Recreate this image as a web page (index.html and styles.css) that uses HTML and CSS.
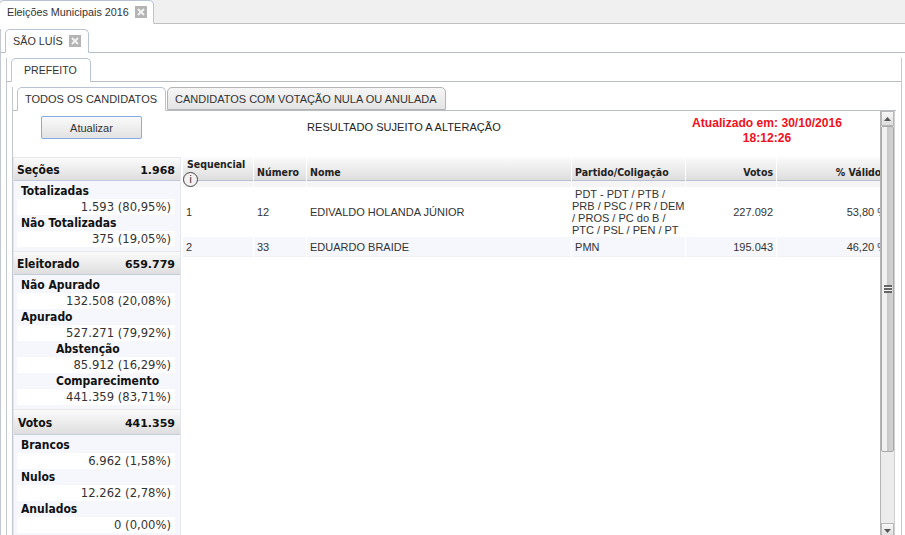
FILE: index.html
```html
<!DOCTYPE html>
<html lang="pt">
<head>
<meta charset="utf-8">
<title>Eleições Municipais 2016</title>
<link rel="stylesheet" href="styles.css">
</head>
<body>
<div class="tabbar top-bar">
  <div class="tab tab-main">Eleições Municipais 2016<span class="close"><svg viewBox="0 0 12 12" width="12" height="12"><rect width="12" height="12" fill="#b4b4b4"/><path d="M3 3l6 6M9 3l-6 6" stroke="#f2f2f2" stroke-width="2"/></svg></span></div>
</div>
<div class="panel p1">
  <div class="tabbar city-bar">
    <div class="tab tab-city">SÃO LUÍS<span class="close"><svg viewBox="0 0 12 12" width="12" height="12"><rect width="12" height="12" fill="#b4b4b4"/><path d="M3 3l6 6M9 3l-6 6" stroke="#f2f2f2" stroke-width="2"/></svg></span></div>
  </div>
  <div class="panel p2">
    <div class="tabbar office-bar">
      <div class="tab tab-office">PREFEITO</div>
    </div>
    <div class="panel p3">
      <div class="tabbar view-bar">
        <div class="tab tab-all">TODOS OS CANDIDATOS</div>
        <div class="tab tab-null">CANDIDATOS COM VOTAÇÃO NULA OU ANULADA</div>
      </div>
      <div class="view">
        <div class="content">
          <div class="actions">
            <button class="refresh">Atualizar</button>
            <div class="notice">RESULTADO SUJEITO A ALTERAÇÃO</div>
            <div class="updated">Atualizado em: 30/10/2016<br>18:12:26</div>
          </div>
          <div class="results">
            <aside class="stats">
              <div class="stat-head"><span>Seções</span><span class="total">1.968</span></div>
              <div class="stat-body">
                <div class="label">Totalizadas</div>
                <div class="value">1.593 (80,95%)</div>
                <div class="label">Não Totalizadas</div>
                <div class="value">375 (19,05%)</div>
              </div>
              <div class="stat-head"><span>Eleitorado</span><span class="total">659.779</span></div>
              <div class="stat-body">
                <div class="label">Não Apurado</div>
                <div class="value">132.508 (20,08%)</div>
                <div class="label">Apurado</div>
                <div class="value">527.271 (79,92%)</div>
                <div class="label sub">Abstenção</div>
                <div class="value">85.912 (16,29%)</div>
                <div class="label sub">Comparecimento</div>
                <div class="value">441.359 (83,71%)</div>
              </div>
              <div class="stat-head votes"><span>Votos</span><span class="total">441.359</span></div>
              <div class="stat-body">
                <div class="label">Brancos</div>
                <div class="value">6.962 (1,58%)</div>
                <div class="label">Nulos</div>
                <div class="value">12.262 (2,78%)</div>
                <div class="label">Anulados</div>
                <div class="value">0 (0,00%)</div>
              </div>
            </aside>
            <table class="grid">
              <colgroup>
                <col class="c-seq"><col class="c-num"><col class="c-name"><col class="c-party"><col class="c-votes"><col class="c-pct">
              </colgroup>
              <thead>
                <tr>
                  <th class="seq"><div class="seq-cell">Sequencial<span class="info">i</span></div></th>
                  <th>Número</th>
                  <th>Nome</th>
                  <th>Partido/Coligação</th>
                  <th class="num">Votos</th>
                  <th class="num">% Válidos</th>
                </tr>
                <tr class="spacer"><td></td><td></td><td></td><td></td><td></td><td></td></tr>
              </thead>
              <tbody>
                <tr>
                  <td>1</td><td>12</td><td>EDIVALDO HOLANDA JÚNIOR</td>
                  <td class="party">&nbsp;PDT - PDT / PTB / PRB / PSC / PR / DEM / PROS / PC do B / PTC / PSL / PEN / PT</td>
                  <td class="num">227.092</td><td class="num">53,80 %</td>
                </tr>
                <tr class="alt">
                  <td>2</td><td>33</td><td>EDUARDO BRAIDE</td>
                  <td class="party">&nbsp;PMN</td>
                  <td class="num">195.043</td><td class="num">46,20 %</td>
                </tr>
              </tbody>
            </table>
          </div>
        </div>
        <div class="scrollbar">
          <div class="arrow up"><svg viewBox="0 0 7 4" width="7" height="4"><path d="M3.500 0L7 4H0z" fill="#555"/></svg></div>
          <div class="thumb"><div class="grip"></div></div>
          <div class="track"></div>
          <div class="arrow down"><svg viewBox="0 0 7 4" width="7" height="4"><path d="M0 0h7L3.500 4z" fill="#555"/></svg></div>
        </div>
      </div>
    </div>
  </div>
</div>
</body>
</html>
```
FILE: styles.css
```css
* { box-sizing: border-box; }
html, body { margin: 0; height: 535px; overflow: hidden; }
body { background: #fff; font: 11px "Liberation Sans", Arial, sans-serif; color: #222; }

.tabbar { display: flex; align-items: flex-end; border-bottom: 1px solid #b8bcc4; }
.top-bar { height: 24px; background: #f0f0f0; border-bottom-color: #c0c0c0; }
.city-bar { height: 24px; margin-top: 5px; padding-left: 4px; }
.office-bar { height: 24px; margin-top: 5px; padding-left: 4px; }
.view-bar { height: 24px; margin-top: 5px; padding-left: 4px; gap: 1px; }

.tab {
  height: 24px; margin-bottom: -1px; background: #fff;
  border: 1px solid #b8c4d4; border-bottom-color: #fff; border-radius: 5px 5px 0 0;
  display: flex; align-items: center; color: #333;
}
.tab-main { width: 155px; margin-left: -1px; padding-left: 7px; font-size: 10.800px; }
.tab-city { width: 84px; padding-left: 7px; font-size: 10.800px; }
.tab-office { width: 80px; padding-left: 12px; font-size: 10.600px; }
.tab-all { width: 149px; padding-left: 7px; }
.tab-null {
  width: 279px; padding-left: 7px; height: 23px; margin-bottom: 0;
  background: linear-gradient(#f6f6f6, #e4e4e4); border-color: #b4b4b4;
}
.close { display: inline-flex; margin-left: 6px; }

.panel { border-left: 1px solid #c4c8d0; }
.p1 { margin-top: 5px; }
.p2 { margin-left: 5px; width: 896px; border-right: 1px solid #c4c8d0; }
.p3 { margin-left: 5px; margin-right: 5px; }

.view { display: flex; height: 427px; }
.content { width: 867px; overflow: hidden; }

.actions { height: 46px; display: flex; }
.refresh {
  width: 101px; height: 23px; margin: 5px 0 0 28px; padding: 0; flex: none;
  border: 1px solid #86ace8; border-radius: 2px;
  background: linear-gradient(#fafafa, #e2e2e2);
  font: 11px "Liberation Sans", Arial, sans-serif; color: #333;
}
.notice { margin: 10px 0 0 165px; width: 200px; flex: none; letter-spacing: .05px; }
.updated {
  margin: 5px 0 0 184px; width: 152px; flex: none; text-align: center;
  color: #f01020; font-size: 12.100px; font-weight: bold; line-height: 15px;
}

.results { display: flex; align-items: flex-start; }

.stats { width: 168px; flex: none; border-left: 1px solid #e4e6ee; border-right: 1px solid #e4e6ee; font-family: "DejaVu Sans", Verdana, sans-serif; font-size: 11.600px; }
.stat-head {
  height: 24px; padding: 2px 5px 0 3px; display: flex; justify-content: space-between; align-items: center;
  background: linear-gradient(#fbfbfb, #dedede); border-top: 1px solid #e8e8e8; border-bottom: 1px solid #c4cad8;
  font-family: "DejaVu Sans Condensed", "DejaVu Sans", sans-serif; font-stretch: condensed;
  font-weight: bold; font-size: 12px; color: #111;
}
.stat-head .total { font-family: "DejaVu Sans", sans-serif; font-stretch: normal; font-size: 11px; }
.stat-head.votes { height: 26px; padding-left: 4px; }
.stat-body { background: #f5f7fd; padding: 2px 5px 4px 3px; }
.label {
  height: 16px; line-height: 16px; padding-left: 4px; color: #111;
  font-family: "DejaVu Sans Condensed", "DejaVu Sans", sans-serif; font-stretch: condensed;
  font-weight: bold; font-size: 12px;
}
.label.sub { padding-left: 39px; }
.value { height: 16px; line-height: 16px; background: #fff; text-align: right; padding-right: 4px; color: #333; }

.grid { table-layout: fixed; border-collapse: separate; border-spacing: 1px 0; width: 709px; margin-left: 1px; flex: none; }
.c-seq { width: 70px; } .c-num { width: 52px; } .c-name { width: 264px; }
.c-party { width: 113px; } .c-votes { width: 90px; } .c-pct { width: 113px; }
.grid th {
  height: 24px; padding: 0 3px 2px; text-align: left; vertical-align: bottom;
  background: linear-gradient(#fbfbfb, #dedede); border-bottom: 1px solid #b8c0d0;
  color: #222; line-height: 12px; white-space: nowrap; overflow: hidden;
  font-family: "DejaVu Sans Condensed", "DejaVu Sans", sans-serif; font-stretch: condensed; font-size: 10.500px;
}
.grid th.seq { vertical-align: top; padding: 0; overflow: visible; }
.seq-cell { position: relative; height: 23px; padding: 1px 0 0 4px; line-height: 12px; }
.grid th.num, .grid td.num { text-align: right; padding-right: 3px; }
.info {
  position: absolute; left: 0; top: 15px; width: 15px; height: 15px; border: 1px solid #444; border-radius: 50%; background: #f2f2f2;
  text-align: center; line-height: 13px; font-weight: normal; font-size: 10px; font-family: "Liberation Sans", sans-serif;
}
.spacer td { height: 6px; background: #f5f5f5; padding: 0; }
.grid td { padding: 0 3px; color: #333; line-height: 12px; white-space: normal; }
.grid td.party { padding: 0; }
.grid tbody tr:first-child td { height: 50px; }
.alt td { height: 20px; background: #f5f7fd; border-bottom: 1px solid #f1f1f5; }

.scrollbar {
  width: 15px; flex: none; height: 427px;
  display: flex; flex-direction: column; background: #ececec;
  border-left: 1px solid #b4b4b4; border-right: 1px solid #d0d0d0;
}
.arrow { height: 15px; flex: none; display: flex; align-items: center; justify-content: center; background: linear-gradient(#f8f8f8, #dcdcdc); border: 1px solid #b8b8b8; }
.thumb {
  height: 326px; flex: none; display: flex; align-items: center; justify-content: center;
  background: linear-gradient(90deg, #f0f0f0, #f0f0f0 50%, #c8c8c8 50%, #d4d4d4);
  border: 1px solid #a8a8a8; border-radius: 2px;
}
.grip { width: 8px; height: 8px; background: repeating-linear-gradient(#666 0 2px, #f4f4f4 2px 3px); }
.track { flex: 1; }
```
